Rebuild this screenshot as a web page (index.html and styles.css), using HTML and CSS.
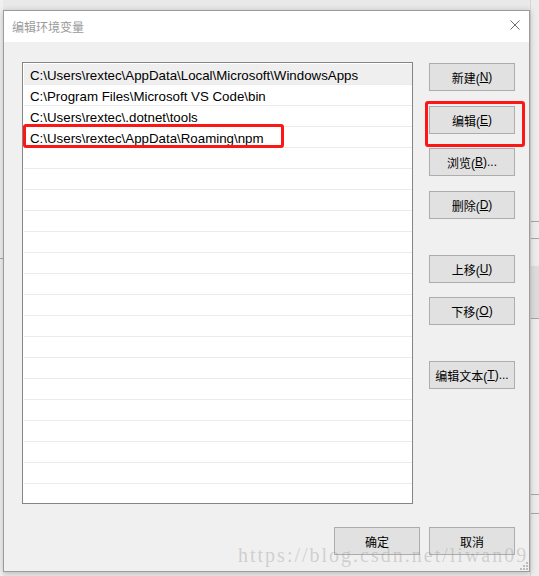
FILE: index.html
```html
<!DOCTYPE html>
<html lang="zh-CN">
<head>
<meta charset="utf-8">
<title>编辑环境变量</title>
<link rel="stylesheet" href="styles.css">
</head>
<body>
<div class="desktop">
  <div class="strip-left"><div class="strip-line"></div></div>
  <div class="window">
    <div class="titlebar">
      <span class="title">编辑环境变量</span>
      <svg class="close" width="10" height="10" viewBox="0 0 10 10"><path d="M0.5 0.5 L9.5 9.5 M9.5 0.5 L0.5 9.5" stroke="#6d6d6d" stroke-width="1" fill="none"/></svg>
    </div>
    <div class="content">
      <div class="main">
        <div class="list">
          <div class="row sel">C:\Users\rextec\AppData\Local\Microsoft\WindowsApps</div>
          <div class="row">C:\Program Files\Microsoft VS Code\bin</div>
          <div class="row">C:\Users\rextec\.dotnet\tools</div>
          <div class="row">C:\Users\rextec\AppData\Roaming\npm</div>
          <div class="row"></div><div class="row"></div><div class="row"></div><div class="row"></div>
          <div class="row"></div><div class="row"></div><div class="row"></div><div class="row"></div>
          <div class="row"></div><div class="row"></div><div class="row"></div><div class="row"></div>
          <div class="row"></div><div class="row"></div><div class="row"></div><div class="row"></div>
        </div>
        <div class="side">
          <button class="btn">新建(<u>N</u>)</button>
          <button class="btn g15">编辑(<u>E</u>)</button>
          <button class="btn g14">浏览(<u>B</u>)...</button>
          <button class="btn g15">删除(<u>D</u>)</button>
          <button class="btn g36">上移(<u>U</u>)</button>
          <button class="btn g14">下移(<u>O</u>)</button>
          <button class="btn g36">编辑文本(<u>T</u>)...</button>
        </div>
      </div>
      <div class="footer">
        <button class="btn">确定</button>
        <button class="btn">取消</button>
      </div>
      <div class="mark mark-row"></div>
      <div class="mark mark-btn"></div>
      <svg class="grip" width="8" height="8" viewBox="0 0 8 8">
        <rect x="6" y="0" width="2" height="2" fill="#bdbdbd"/>
        <rect x="3" y="3" width="2" height="2" fill="#bdbdbd"/>
        <rect x="6" y="3" width="2" height="2" fill="#bdbdbd"/>
        <rect x="0" y="6" width="2" height="2" fill="#bdbdbd"/>
        <rect x="3" y="6" width="2" height="2" fill="#bdbdbd"/>
        <rect x="6" y="6" width="2" height="2" fill="#bdbdbd"/>
      </svg>
    </div>
  </div>
  <div class="strip-right">
    <div class="sr-line l1"></div>
    <div class="sr-line l2"></div>
    <div class="sr-block"></div>
    <div class="sr-line l3"></div>
    <div class="sr-line l4"></div>
  </div>
  <div class="watermark">https://blog.csdn.net/liwan09</div>
</div>
</body>
</html>
```
FILE: styles.css
```css
* { box-sizing: border-box; }
html, body { margin: 0; padding: 0; }
body {
  width: 539px;
  height: 576px;
  overflow: hidden;
  background: #e9e9e9;
  font-family: "Liberation Sans", "Noto Sans CJK SC", sans-serif;
}
.desktop {
  position: relative;
  display: flex;
  width: 539px;
  height: 576px;
}
.strip-left {
  width: 3px;
  height: 576px;
  background: #f0f0f0;
  padding-top: 258px;
}
.strip-line {
  height: 1px;
  background: #a8a8a8;
}
.window {
  width: 527px;
  height: 562px;
  margin-top: 10px;
  border: 1px solid #9c9c9c;
  background: #f0f0f0;
  box-shadow: 0 1px 6px rgba(0, 0, 0, 0.22);
  display: flex;
  flex-direction: column;
  flex: none;
  position: relative;
  z-index: 1;
}
.titlebar {
  height: 31px;
  background: #ffffff;
  display: flex;
  align-items: center;
  justify-content: space-between;
  padding: 0 9px 1px 8px;
}
.title {
  font-family: "Noto Sans CJK SC", sans-serif;
  font-size: 12px;
  color: #9a9a9a;
}
.close { display: block; margin-top: -2px; }
.content {
  position: relative;
  flex: 1;
  padding: 20px 14px 16px 18px;
  display: flex;
  flex-direction: column;
}
.main {
  display: flex;
  align-items: flex-start;
}
.list {
  width: 391px;
  height: 442px;
  border: 1px solid #858585;
  background: #ffffff;
  padding: 1px 0 0 1px;
  overflow: hidden;
}
.row {
  height: 21px;
  border-bottom: 1px solid #ebebeb;
  padding: 3px 0 0 6px;
  font-size: 13.3px;
  line-height: 17px;
  color: #000;
  white-space: nowrap;
  overflow: hidden;
}
.row.sel { background: #efefef; }
.side {
  display: flex;
  flex-direction: column;
  margin-left: 16px;
  padding-top: 1px;
}
.btn {
  width: 86px;
  height: 28px;
  margin: 0;
  padding: 0;
  border: 1px solid #adadad;
  background: #e1e1e1;
  font-family: "Liberation Sans", "Noto Sans CJK SC", sans-serif;
  font-size: 12px;
  color: #000;
  display: flex;
  align-items: center;
  justify-content: center;
  white-space: nowrap;
}
.btn u { text-underline-offset: 1px; }
.g14 { margin-top: 14px; }
.g15 { margin-top: 15px; }
.g36 { margin-top: 36px; }
.footer {
  display: flex;
  justify-content: flex-end;
  gap: 9px;
  margin-top: 23px;
}
.mark {
  position: absolute;
  border: 3px solid #fd1616;
  border-radius: 3px;
}
.mark-row {
  left: 19px;
  top: 82px;
  width: 261px;
  height: 24px;
}
.mark-btn {
  left: 421px;
  top: 59px;
  width: 100px;
  height: 46px;
}
.grip {
  position: absolute;
  right: 1px;
  bottom: 1px;
}
.strip-right {
  flex: 1;
  height: 576px;
  background: #ececec;
  border-left: 1px solid #d6d6d6;
  padding-top: 221px;
}
.sr-line { height: 1px; background: #a6a6a6; }
.l2 { margin-top: 16px; }
.sr-block {
  margin-top: 27px;
  height: 53px;
  background: #dcdcdc;
  border-bottom: 1px solid #a6a6a6;
}
.l3 { margin-top: 175px; }
.l4 { margin-top: 18px; }
.watermark {
  position: absolute;
  left: 238px;
  top: 544px;
  z-index: 2;
  font-family: "Liberation Serif", serif;
  font-size: 20px;
  letter-spacing: 2px;
  color: rgba(160, 160, 160, 0.42);
  white-space: nowrap;
}
```
